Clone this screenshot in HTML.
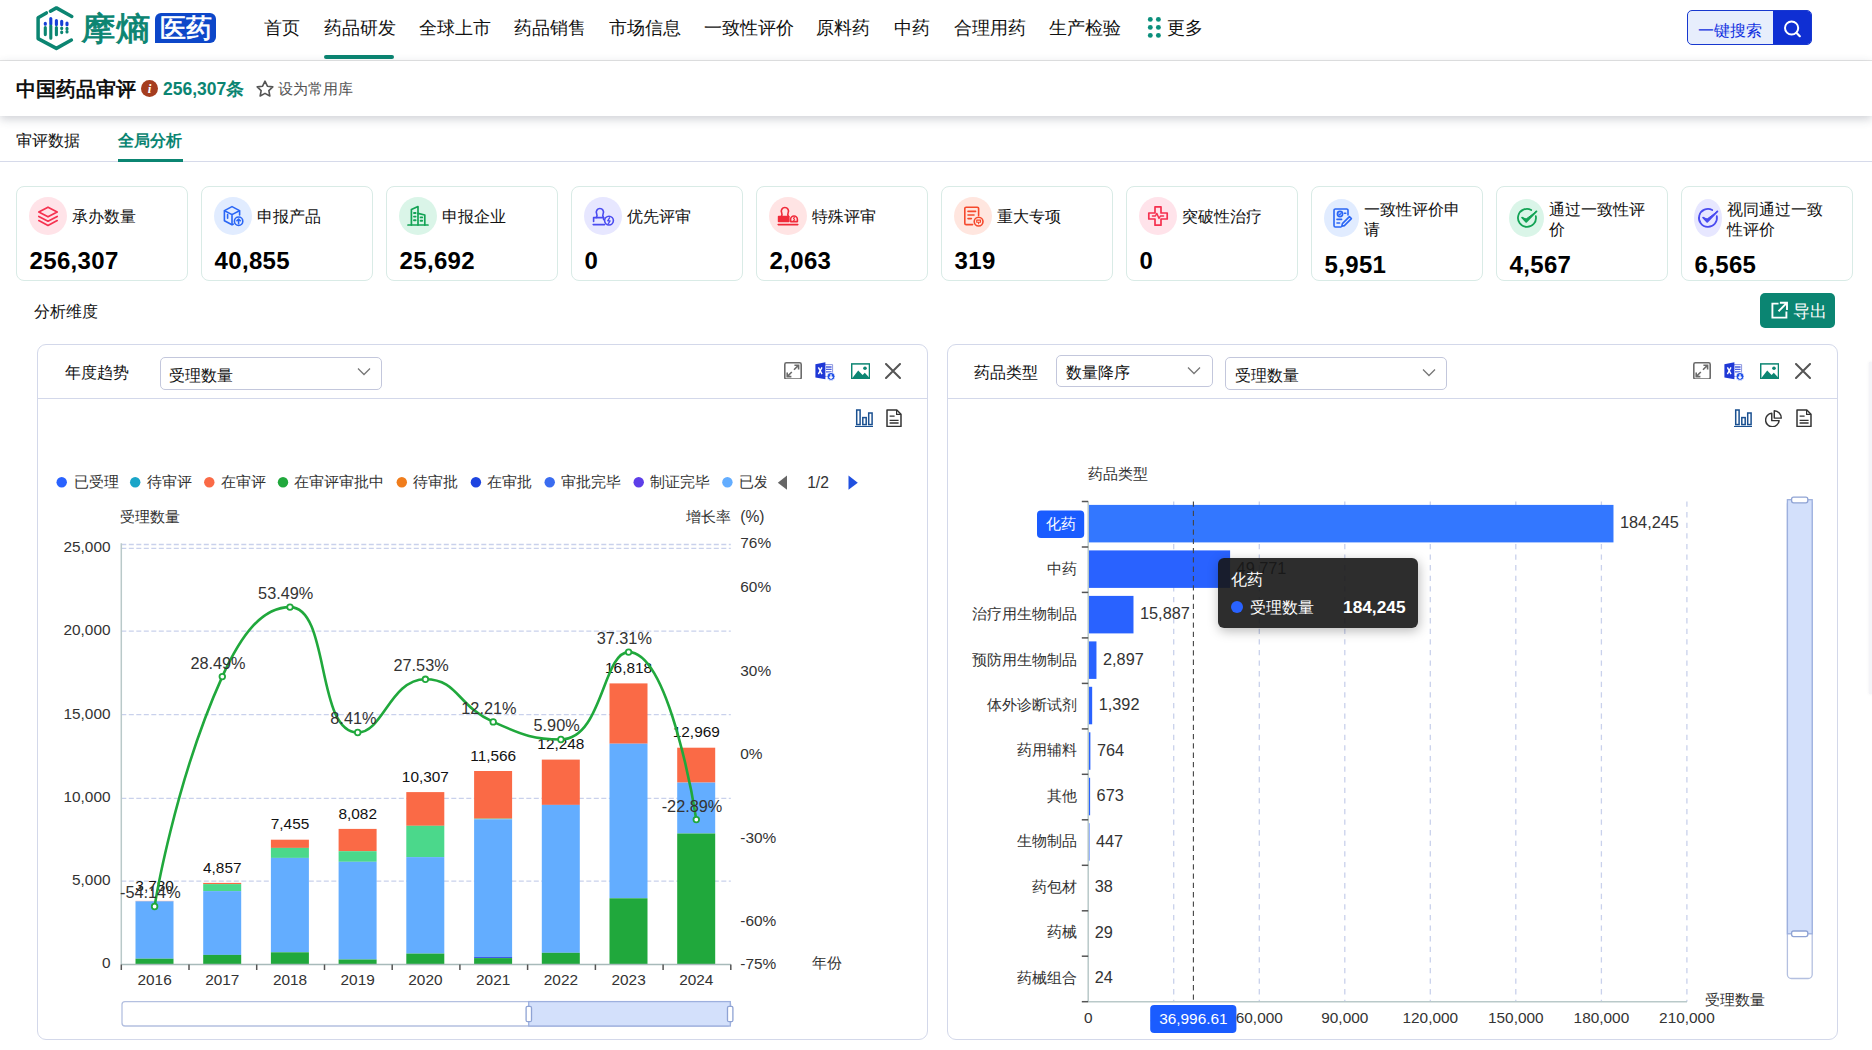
<!DOCTYPE html>
<html lang="zh">
<head>
<meta charset="utf-8">
<title>中国药品审评</title>
<style>
*{box-sizing:border-box;margin:0;padding:0}
html,body{width:1872px;height:1050px;overflow:hidden;background:#fff}
body{font-family:"Liberation Sans",sans-serif;color:#111;position:relative}
.abs{position:absolute}
/* header */
#hdr{position:absolute;left:0;top:0;width:1872px;height:61px;background:#fff;border-bottom:1px solid #e6e6e6}
.nav{position:absolute;top:16px;font-size:17.7px;line-height:24px;color:#111;white-space:nowrap}
#navline{position:absolute;left:324px;top:55px;width:70px;height:4px;border-radius:2px;background:#0b8572}
#sbox{position:absolute;left:1687px;top:10px;width:125px;height:35px;border:1.5px solid #1738cf;border-radius:5px;background:#e7eefc;overflow:hidden}
#sbox .t{position:absolute;left:10px;top:6.500px;font-size:16.200px;line-height:24px;color:#1030e0;white-space:nowrap}
#sbox .b{position:absolute;right:-1px;top:-1px;width:39px;height:35px;background:#0f2fd3}
/* title */
#ttl{position:absolute;left:0;top:61px;width:1872px;height:55px;background:#fff;box-shadow:0 3px 9px rgba(50,60,80,.24)}
#ttl h1{position:absolute;left:16px;top:14px;font-size:19.8px;line-height:28px;font-weight:bold;color:#111;white-space:nowrap}
#info{position:absolute;left:141px;top:19px;width:17px;height:17px;border-radius:50%;background:#a53d1f;color:#fff;font:italic bold 13px/17px "Liberation Serif",serif;text-align:center}
#cnt{position:absolute;left:163px;top:15px;font-size:17.5px;line-height:26px;font-weight:bold;color:#0b8572;white-space:nowrap}
#fav{position:absolute;left:278px;top:17px;font-size:15px;line-height:22px;color:#555;white-space:nowrap}
/* tabs */
#tabs{position:absolute;left:0;top:116px;width:1872px;height:46px;border-bottom:1.5px solid #d6daea}
.tab{position:absolute;top:12px;font-size:16.2px;line-height:24px;white-space:nowrap}
#tabline{position:absolute;left:118px;top:159.400px;width:65px;height:2.600px;background:#0b8572}
/* cards */
.card{position:absolute;top:186px;width:172px;height:95px;border:1.5px solid #d9ebe6;border-radius:8px;background:#fff}
.card .ic{position:absolute;left:12px;top:10px;width:38px;height:38px;border-radius:50%}
.card .ic svg{position:absolute;left:50%;top:50%;width:24px;height:24px;margin:-12px 0 0 -12px}
.card .lb{position:absolute;left:55px;top:17px;font-size:16.2px;line-height:24px;color:#111;white-space:nowrap}
.card .lb2{position:absolute;top:12px;font-size:16.2px;line-height:20px;color:#111}
.card .nm{position:absolute;left:12.5px;top:58px;font-size:24px;line-height:32px;font-weight:bold;color:#000;letter-spacing:.35px;white-space:nowrap}
.card.w .nm{top:62px}
.card.w .ic{top:12px}
/* analysis row */
#dim{position:absolute;left:34px;top:298.800px;font-size:16.2px;line-height:24px;color:#111}
#exp{position:absolute;left:1760px;top:293px;width:75px;height:35px;border-radius:5px;background:#0b8572;color:#fff}
#exp span{position:absolute;left:33px;top:6px;font-size:16.5px;line-height:24px;white-space:nowrap}
/* panels */
.panel{position:absolute;top:344px;height:696px;border:1.5px solid #d3d8ea;border-radius:9px;background:#fff}
.panel .hd{position:absolute;left:0;top:0;right:0;height:54px;border-bottom:1.5px solid #d3d8ea}
.ptitle{position:absolute;top:16px;font-size:16.2px;line-height:24px;color:#111;white-space:nowrap}
.sel{position:absolute;height:33px;border:1.5px solid #c3c7dc;border-radius:5px;background:#fff}
.sel span{position:absolute;left:8px;top:5px;font-size:16.2px;line-height:24px;color:#111;white-space:nowrap}
.sel svg{position:absolute;right:10px;top:9px;width:14px;height:10px}
svg text{font-family:"Liberation Sans",sans-serif}
</style>
</head>
<body>
<div id="hdr">
<svg class="abs" style="left:30px;top:0" width="200" height="60" viewBox="30 0 200 60">
<path d="M46.4 12.9 L38.1 17.7 V38.6 L56.4 48.4 L71.4 40 M71.8 16.5 L56.4 7.9 L50.4 11.2" fill="none" stroke="#0b8572" stroke-width="3.5" stroke-linecap="round" stroke-linejoin="round"/>
<g stroke-width="3.1" stroke-linecap="round">
<path d="M45.3 23.2V24.2M50.8 18.5V24.2M56.4 20.6V24.6M61.7 21.2V24.6M67 23V24.8" stroke="#1540d6"/>
<path d="M45.3 27.6V34.6M50.8 26V38.2M56.4 27.6V34.8M61.7 28V28.6M61.7 32V32.6M67 28.4V29M67 31.6V32" stroke="#0b8572"/>
</g>
<path d="M155 19a6 6 0 0 1 6-6h49a6 6 0 0 1 6 6v18a6 6 0 0 1-6 6h-55z" fill="#0d47c9"/>
<text x="81" y="39.6" font-size="32.8" fill="#0b8572" stroke="#0b8572" stroke-width=".9" textLength="69" lengthAdjust="spacingAndGlyphs">摩熵</text>
<text x="159.5" y="37.3" font-size="26" fill="#fff" stroke="#fff" stroke-width=".7" textLength="52" lengthAdjust="spacingAndGlyphs">医药</text>
</svg>
<div class="nav" style="left:264px">首页</div>
<div class="nav" style="left:324px">药品研发</div>
<div class="nav" style="left:419px">全球上市</div>
<div class="nav" style="left:514px">药品销售</div>
<div class="nav" style="left:609px">市场信息</div>
<div class="nav" style="left:704px">一致性评价</div>
<div class="nav" style="left:816px">原料药</div>
<div class="nav" style="left:894px">中药</div>
<div class="nav" style="left:954px">合理用药</div>
<div class="nav" style="left:1049px">生产检验</div>
<div class="nav" style="left:1167px">更多</div>
<div id="navline"></div>
<svg class="abs" style="left:1146px;top:15px" width="18" height="26" viewBox="0 0 18 26"><g fill="#0b8f7c"><circle cx="4.3" cy="4.4" r="2.45"/><circle cx="12.4" cy="4.4" r="2.45"/><circle cx="4.3" cy="12.4" r="2.45"/><circle cx="12.4" cy="12.4" r="2.45"/><circle cx="4.3" cy="20.4" r="2.45"/><circle cx="12.4" cy="20.4" r="2.45"/></g></svg>
<div id="sbox"><div class="t">一键搜索</div><div class="b"><svg width="39" height="35" viewBox="0 0 39 35"><circle cx="18.600" cy="18" r="6.600" fill="none" stroke="#fff" stroke-width="2"/><path d="M23.400 22.800L26.800 26.200" stroke="#fff" stroke-width="2.2" stroke-linecap="round"/></svg></div></div>
</div>
<div id="ttl"><h1>中国药品审评</h1><div id="info">i</div><div id="cnt">256,307条</div>
<svg class="abs" style="left:255px;top:18px" width="20" height="20" viewBox="0 0 20 20"><path d="M10 2.2l2.4 5 5.4.7-3.95 3.75.98 5.35L10 14.4l-4.83 2.6.98-5.35L2.2 7.9l5.4-.7z" fill="none" stroke="#555" stroke-width="1.6" stroke-linejoin="round"/></svg>
<div id="fav">设为常用库</div></div>
<div id="tabs"><div class="tab" style="left:16px">审评数据</div><div class="tab" style="left:118px;color:#0b8572;font-weight:bold">全局分析</div></div><div id="tabline"></div>
<div class="card" style="left:16px"><div class="ic" style="background:#ffe3e8;width:38px"><svg viewBox="0 0 24 24"><g fill="none" stroke="#f5314f" stroke-width="1.7" stroke-linejoin="round" stroke-linecap="round"><path d="M12 3.2L21.2 8 12 12.8 2.8 8z"/><path d="M2.8 12.4L12 17.2l9.2-4.8"/><path d="M2.8 16.6L12 21.4l9.2-4.8"/></g></svg></div><div class="lb">承办数量</div><div class="nm">256,307</div></div>
<div class="card" style="left:201px"><div class="ic" style="background:#e1ecff;width:38px"><svg viewBox="0 0 24 24"><g fill="none" stroke="#2a66f5" stroke-width="1.6" stroke-linejoin="round" stroke-linecap="round"><path d="M18.6 11V6.6L11 2.6 3.4 6.6v10.2l7.6 4 1.2-.6"/><path d="M3.6 6.8L11 10.6l7.4-3.8M11 10.6V20.4M6.6 10.6v3.6"/><circle cx="17.6" cy="17.2" r="4.2"/><path d="M17.6 19.4v-4.2M15.9 16.7l1.7-1.7 1.7 1.7"/></g></svg></div><div class="lb">申报产品</div><div class="nm">40,855</div></div>
<div class="card" style="left:386px"><div class="ic" style="background:#daf5e8;width:38px"><svg viewBox="0 0 24 24"><g fill="none" stroke="#13a355" stroke-width="1.7" stroke-linejoin="round" stroke-linecap="round"><path d="M2 21h20"/><path d="M5.4 21V5.6L12 2.6V21"/><path d="M12 9.4l6.8 1.6V21"/><path d="M8 9h1.6M8 12.6h1.6M8 16.2h1.6M14.6 13.4h1.6M14.6 16.8h1.6" stroke-width="1.9"/></g></svg></div><div class="lb">申报企业</div><div class="nm">25,692</div></div>
<div class="card" style="left:571px"><div class="ic" style="background:#e7e7ff;width:38px"><svg viewBox="0 0 24 24"><g fill="none" stroke="#4a4bf0" stroke-width="1.6" stroke-linejoin="round" stroke-linecap="round"><path d="M5.2 13.6c.9-1.4 1.2-2.4.5-3.8a3.6 3.6 0 1 1 6.4 0c-.7 1.4-.4 2.4.5 3.8"/><path d="M2.6 17.4v-3.8h10v2"/><path d="M2.2 20.6h11.4"/><circle cx="18" cy="16.6" r="4.4"/><path d="M18.6 13.8l-1.9 3h2.4l-1.9 3" stroke-width="1.3"/></g></svg></div><div class="lb">优先评审</div><div class="nm">0</div></div>
<div class="card" style="left:756px"><div class="ic" style="background:#ffe4e4;width:38px"><svg viewBox="0 0 24 24"><g fill="none" stroke="#f02b3a" stroke-width="1.6" stroke-linejoin="round" stroke-linecap="round"><path d="M5.2 12.6c.9-1.4 1.2-2.4.5-3.8a3.6 3.6 0 1 1 6.4 0c-.7 1.4-.4 2.4.5 3.8"/><path d="M2.6 17.4v-4.8h10.2v4.8z" fill="#f02b3a"/><path d="M2.2 20.6h19.6"/><path d="M14.6 17.6v-2.2a3.4 3.4 0 0 1 6.8 0v2.2z"/><path d="M18.7 13.7h-1.1v1.3h1v1.3h-1.2" stroke-width="1"/></g></svg></div><div class="lb">特殊评审</div><div class="nm">2,063</div></div>
<div class="card" style="left:941px"><div class="ic" style="background:#ffe6df;width:38px"><svg viewBox="0 0 24 24"><g fill="none" stroke="#f5492d" stroke-width="1.6" stroke-linejoin="round" stroke-linecap="round"><path d="M11.6 20.6H5.2a1.4 1.4 0 0 1-1.4-1.4V4.6a1.4 1.4 0 0 1 1.4-1.4h11a1.4 1.4 0 0 1 1.4 1.4v7"/><path d="M7 7.4h7.6M7 11h6M7 14.6h3.4"/><circle cx="17.6" cy="17.6" r="4.4"/><path d="M15.7 16.1h3.8v2.2h-3.8zM17.6 18.3v1.5" stroke-width="1.1"/></g></svg></div><div class="lb">重大专项</div><div class="nm">319</div></div>
<div class="card" style="left:1126px"><div class="ic" style="background:#ffe3ea;width:38px"><svg viewBox="0 0 24 24"><g fill="none" stroke="#f5314f" stroke-width="1.7" stroke-linejoin="round" stroke-linecap="round"><path d="M9 2.8h6v6.2h6.2v6H15v6.2H9V15H2.8V9H9z"/><path d="M6.4 12h3l1.4-2.6 2.2 5 1.4-2.4h3.2" stroke-width="1.4"/></g></svg></div><div class="lb">突破性治疗</div><div class="nm">0</div></div>
<div class="card w" style="left:1311px"><div class="ic" style="background:#e1ecff;width:35px"><svg viewBox="0 0 24 24"><g fill="none" stroke="#2a66f5" stroke-width="1.6" stroke-linejoin="round" stroke-linecap="round"><path d="M11 21H5.4A1.4 1.4 0 0 1 4 19.6V4.4A1.4 1.4 0 0 1 5.400 3h11.200A1.400 1.400 0 0 1 18 4.400V9"/><circle cx="10" cy="8" r="2.6"/><path d="M8.900 8l.8.9 1.500-1.700" stroke-width="1.200"/><path d="M14.400 7.200h1.400M7 13.400h4.600M7 17h2.600"/><path d="M19.400 10.600l2 2-7 7-2.600.6.600-2.600z"/></g></svg></div><div class="lb2" style="left:52px">一致性评价申<br>请</div><div class="nm">5,951</div></div>
<div class="card w" style="left:1496px"><div class="ic" style="background:#daf5e8;width:35px"><svg viewBox="0 0 24 24"><g fill="none" stroke="#13a355" stroke-width="1.8" stroke-linejoin="round" stroke-linecap="round"><path d="M20.800 10.200A9 9 0 1 1 16.200 4"/><path d="M7.200 11.600l4 4.200L21.400 5.400"/><path d="M7.200 11.600l4 4.200L21.400 5.400 11.400 12.800z" fill="#13a355" stroke-width="1"/></g></svg></div><div class="lb2" style="left:52px">通过一致性评<br>价</div><div class="nm">4,567</div></div>
<div class="card w" style="left:1681px"><div class="ic" style="background:#e7e7ff;width:28px"><svg viewBox="0 0 24 24"><g fill="none" stroke="#4a4bf0" stroke-width="1.800" stroke-linejoin="round" stroke-linecap="round"><path d="M20.800 10.200A9 9 0 1 1 16.200 4"/><path d="M7.200 11.600l4 4.200L21.400 5.400"/><path d="M7.200 11.600l4 4.200L21.400 5.400 11.400 12.800z" fill="#4a4bf0" stroke-width="1"/></g></svg></div><div class="lb2" style="left:45px">视同通过一致<br>性评价</div><div class="nm">6,565</div></div>

<div id="dim">分析维度</div>
<div id="exp"><svg class="abs" style="left:10px;top:8px" width="19" height="19" viewBox="0 0 19 19"><g fill="none" stroke="#fff" stroke-width="1.9" stroke-linecap="square" stroke-linejoin="miter"><path d="M7.600 2.600H2.400v14h14v-5.200"/><path d="M10.800 1.800h6.200v6.200M16.600 2.200l-7.400 7.400"/></g></svg><span>导出</span></div>
<div id="rstrip" class="abs" style="left:1868.500px;top:362px;width:8px;height:332px;background:#f4f4f8;box-shadow:0 0 3px rgba(90,90,120,.10)"></div>
<!--PANEL1--><div class="panel" style="left:37px;width:891px"><div class="hd"></div></div>
<div class="ptitle" style="left:65px;top:360px">年度趋势</div>
<div class="sel" style="left:160px;top:357px;width:222px"><span>受理数量</span><svg viewBox="0 0 14 10"><path d="M1 1.500l6 6 6-6" fill="none" stroke="#777" stroke-width="1.300"/></svg></div>
<svg class="abs" style="left:783.5px;top:361.600px" width="18" height="17.800" viewBox="0 0 18 17.800"><g fill="none" stroke="#6b6b6b" stroke-width="1.600"><rect x="0.800" y="0.800" width="16.400" height="16.200" rx="1.600"/><path d="M10 7.800l4.400-4.400M10.400 3.200h4.200v4.200M7.800 10l-4.400 4.400M3.200 10.400v4.200h4.200" stroke-width="1.600"/></g></svg><svg class="abs" style="left:815.0px;top:361px" width="21" height="20" viewBox="0 0 21 20"><g><path d="M9 3.600h8.600v11.800H9z" fill="#fff" stroke="#8d97e0" stroke-width="1"/><path d="M11 6h5.600M11 8.400h5.600M11 10.800h5.600" stroke="#4a5fe0" stroke-width="1.300"/><path d="M0.400 3.200L10.400 1.200v17L0.400 16.400z" fill="#1f38d6"/><path d="M3.400 6.400l3.600 6.800M7 6.400l-3.600 6.800" stroke="#fff" stroke-width="1.400"/><circle cx="16" cy="15.400" r="4" fill="#1f50e8" stroke="#fff" stroke-width=".8"/><path d="M16 13.200v4M14.400 15.800l1.600 1.600 1.600-1.600" fill="none" stroke="#fff" stroke-width="1.300"/></g></svg><svg class="abs" style="left:850.8px;top:362.500px" width="19.200" height="16.600" viewBox="0 0 19.200 16.600"><g><rect x="0.700" y="0.900" width="17.800" height="14.800" fill="#fff" stroke="#0b8572" stroke-width="1.500"/><path d="M1 15.600l6.200-8 4.400 4.400 2.200-2.200 4.400 4.600v1.200z" fill="#0b8572"/><circle cx="14" cy="5.200" r="1.800" fill="#0b8572"/></g></svg><svg class="abs" style="left:885.3px;top:362.800px" width="16" height="16" viewBox="0 0 16 16"><path d="M1 1l14 14M15 1L1 15" stroke="#555" stroke-width="2" fill="none" stroke-linecap="round"/></svg><svg class="abs" style="left:855.200px;top:409px" width="18" height="18.200" viewBox="0 0 18 18.200"><g fill="none" stroke="#1a5090" stroke-width="1.500"><rect x="1.700" y="1" width="3.400" height="14.600"/><rect x="7.800" y="8.600" width="3.400" height="7"/><rect x="13.700" y="4" width="3.400" height="11.600"/><path d="M0 17.600h18" stroke-width="1.300"/></g></svg><svg class="abs" style="left:886px;top:409px" width="16" height="18.400" viewBox="0 0 16 18.400"><g fill="none" stroke="#333" stroke-width="1.500" stroke-linejoin="round"><path d="M1 1h9.800l4.200 4.200v12.200H1z"/><path d="M10.600 1v4.400h4.400" stroke-width="1.200"/><path d="M3.600 7.200h5M3.600 11.300h9M3.600 14h9" stroke-width="1.300"/></g></svg>
<svg class="abs" style="left:38px;top:440px" width="889" height="598" viewBox="38 440 889 598">
<defs><clipPath id="lc"><rect x="40" y="465" width="726.500" height="34"/></clipPath></defs><g clip-path="url(#lc)" font-size="15" fill="#333"><circle cx="61.7" cy="482.300" r="5.200" fill="#2962ff"/><text x="73.5" y="486.800">已受理</text><circle cx="135.2" cy="482.300" r="5.200" fill="#1aa5c8"/><text x="146.5" y="486.800">待审评</text><circle cx="209.3" cy="482.300" r="5.200" fill="#fa6a46"/><text x="220.6" y="486.800">在审评</text><circle cx="283.0" cy="482.300" r="5.200" fill="#20a83c"/><text x="294.4" y="486.800">在审评审批中</text><circle cx="401.8" cy="482.300" r="5.200" fill="#f07d1c"/><text x="412.9" y="486.800">待审批</text><circle cx="475.9" cy="482.300" r="5.200" fill="#1d44e0"/><text x="487.3" y="486.800">在审批</text><circle cx="549.7" cy="482.300" r="5.200" fill="#3a6cf0"/><text x="561.3" y="486.800">审批完毕</text><circle cx="638.7" cy="482.300" r="5.200" fill="#5d3ee8"/><text x="650.0" y="486.800">制证完毕</text><circle cx="727.4" cy="482.300" r="5.200" fill="#63adff"/><text x="738.7" y="486.800">已发</text></g>
<path d="M777.800 482.700l9.200-7.100v14.200z" fill="#666"/><path d="M857.800 482.700l-9.300-7.100v14.200z" fill="#2050e0"/><text x="818" y="488" font-size="15.600" fill="#333" text-anchor="middle">1/2</text>
<text x="120.300" y="521.700" font-size="15" fill="#333">受理数量</text><text x="686" y="521.700" font-size="15" fill="#333">增长率</text><text x="740.300" y="522" font-size="15.600" fill="#333">(%)</text>
<g stroke="#c9d1ec" stroke-width="1.300" stroke-dasharray="5 2.500" fill="none"><path d="M121.300 544.500H730.800"/><path d="M121.300 548.3H730.800"/><path d="M121.300 631.2H730.800"/><path d="M121.300 714.6H730.800"/><path d="M121.300 798.4H730.800"/><path d="M121.300 881.2H730.800"/></g>
<g font-size="15.400" fill="#333" text-anchor="end"><text x="110.500" y="552.0">25,000</text><text x="110.500" y="635.2">20,000</text><text x="110.500" y="718.5">15,000</text><text x="110.500" y="801.8">10,000</text><text x="110.500" y="885.0">5,000</text><text x="110.500" y="968.2">0</text></g>
<g font-size="15.400" fill="#333"><text x="740.300" y="548.0">76%</text><text x="740.300" y="592.3">60%</text><text x="740.300" y="675.8">30%</text><text x="740.300" y="758.9">0%</text><text x="740.300" y="843.3">-30%</text><text x="740.300" y="926.3">-60%</text><text x="740.300" y="968.5">-75%</text></g>
<text x="811.600" y="968.400" font-size="15" fill="#333">年份</text>
<g><rect x="135.5" y="900.9" width="38" height="0.4" fill="#fa6a46"/><rect x="135.5" y="901.3" width="38" height="57.4" fill="#63adff"/><rect x="135.5" y="958.7" width="38" height="5.8" fill="#20a83c"/><rect x="203.2" y="882.9" width="38" height="1.2" fill="#fa6a46"/><rect x="203.2" y="884.1" width="38" height="7.0" fill="#4bd88b"/><rect x="203.2" y="891.1" width="38" height="63.8" fill="#63adff"/><rect x="203.2" y="954.9" width="38" height="9.6" fill="#20a83c"/><rect x="270.9" y="839.7" width="38" height="8.2" fill="#fa6a46"/><rect x="270.9" y="847.9" width="38" height="10.0" fill="#4bd88b"/><rect x="270.9" y="857.9" width="38" height="94.4" fill="#63adff"/><rect x="270.9" y="952.3" width="38" height="12.2" fill="#20a83c"/><rect x="338.6" y="828.9" width="38" height="22.3" fill="#fa6a46"/><rect x="338.6" y="851.2" width="38" height="10.6" fill="#4bd88b"/><rect x="338.6" y="861.8" width="38" height="97.7" fill="#63adff"/><rect x="338.6" y="959.5" width="38" height="5.0" fill="#20a83c"/><rect x="406.3" y="792.1" width="38" height="33.7" fill="#fa6a46"/><rect x="406.3" y="825.8" width="38" height="31.3" fill="#4bd88b"/><rect x="406.3" y="857.1" width="38" height="96.5" fill="#63adff"/><rect x="406.3" y="953.6" width="38" height="10.9" fill="#20a83c"/><rect x="474.1" y="771.0" width="38" height="47.7" fill="#fa6a46"/><rect x="474.1" y="818.7" width="38" height="0.6" fill="#4bd88b"/><rect x="474.1" y="819.3" width="38" height="137.6" fill="#63adff"/><rect x="474.1" y="956.9" width="38" height="1.2" fill="#3a5ce8"/><rect x="474.1" y="958.1" width="38" height="6.4" fill="#20a83c"/><rect x="541.8" y="759.6" width="38" height="45.3" fill="#fa6a46"/><rect x="541.8" y="804.9" width="38" height="147.9" fill="#63adff"/><rect x="541.8" y="952.8" width="38" height="11.7" fill="#20a83c"/><rect x="609.5" y="683.4" width="38" height="60.3" fill="#fa6a46"/><rect x="609.5" y="743.7" width="38" height="154.6" fill="#63adff"/><rect x="609.5" y="898.3" width="38" height="66.2" fill="#20a83c"/><rect x="677.2" y="747.7" width="38" height="34.9" fill="#fa6a46"/><rect x="677.2" y="782.6" width="38" height="50.9" fill="#63adff"/><rect x="677.2" y="833.5" width="38" height="131.0" fill="#20a83c"/></g>
<path d="M121.300 543.200V964.500" stroke="#b9c9c9" stroke-width="1.500"/><path d="M121.300 964.500H730.800" stroke="#a8baba" stroke-width="1.500"/><g stroke="#555" stroke-width="1.500"><path d="M121.3 964.500v5.500"/><path d="M189.0 964.500v5.500"/><path d="M256.7 964.500v5.500"/><path d="M324.5 964.500v5.500"/><path d="M392.2 964.500v5.500"/><path d="M459.9 964.500v5.500"/><path d="M527.6 964.500v5.500"/><path d="M595.4 964.500v5.500"/><path d="M663.1 964.500v5.500"/><path d="M730.8 964.500v5.500"/></g>
<g font-size="15.400" fill="#333" text-anchor="middle"><text x="154.6" y="985.400">2016</text><text x="222.3" y="985.400">2017</text><text x="290.0" y="985.400">2018</text><text x="357.7" y="985.400">2019</text><text x="425.4" y="985.400">2020</text><text x="493.2" y="985.400">2021</text><text x="560.9" y="985.400">2022</text><text x="628.6" y="985.400">2023</text><text x="696.3" y="985.400">2024</text></g>
<g font-size="15.400" fill="#111" text-anchor="middle"><text x="154.6" y="890.5">3,780</text><text x="222.3" y="872.5">4,857</text><text x="290.0" y="829.3">7,455</text><text x="357.7" y="818.5">8,082</text><text x="425.4" y="781.7">10,307</text><text x="493.2" y="760.6">11,566</text><text x="560.9" y="749.2">12,248</text><text x="628.6" y="673.0">16,818</text><text x="696.3" y="737.3">12,969</text></g>
<path d="M154.6 906.5 C154.6 906.5 174.1 783.2 222.3 676.6 C241.8 633.5 262.6 607.1 290.0 607.1 C330.3 607.1 315.5 732.5 357.7 732.5 C383.2 732.5 390.3 679.3 425.4 679.3 C458.1 679.3 457.0 705.9 493.2 721.9 C524.8 736.0 534.6 739.5 560.9 739.5 C602.4 739.5 602.9 652.1 628.6 652.1 C670.6 652.1 696.3 819.6 696.3 819.6" fill="none" stroke="#20a83c" stroke-width="2.600" stroke-linejoin="round"/><g fill="#fff" stroke="#20a83c" stroke-width="1.800"><circle cx="154.6" cy="906.5" r="2.800"/><circle cx="222.3" cy="676.6" r="2.800"/><circle cx="290.0" cy="607.1" r="2.800"/><circle cx="357.7" cy="732.5" r="2.800"/><circle cx="425.4" cy="679.3" r="2.800"/><circle cx="493.2" cy="721.9" r="2.800"/><circle cx="560.9" cy="739.5" r="2.800"/><circle cx="628.6" cy="652.1" r="2.800"/><circle cx="696.3" cy="819.6" r="2.800"/></g>
<g font-size="16.300" fill="#333" text-anchor="middle"><text x="150.3" y="898.4">-54.14%</text><text x="218.0" y="668.5">28.49%</text><text x="285.7" y="599.0">53.49%</text><text x="353.4" y="724.4">8.41%</text><text x="421.1" y="671.2">27.53%</text><text x="488.9" y="713.8">12.21%</text><text x="556.6" y="731.4">5.90%</text><text x="624.3" y="644.0">37.31%</text><text x="692.0" y="811.5">-22.89%</text></g>
<rect x="122" y="1001.600" width="608.600" height="24.400" rx="3" fill="#fff" stroke="#b4c0e0" stroke-width="1.300"/><rect x="528.700" y="1001.600" width="201.600" height="24.400" fill="#d3e0fb" stroke="#9db0de" stroke-width="1.300"/><rect x="526.100" y="1006.300" width="5.400" height="15.400" rx="1.500" fill="#fff" stroke="#8fa3d4" stroke-width="1.300"/><rect x="727.500" y="1006.300" width="5.400" height="15.400" rx="1.500" fill="#fff" stroke="#8fa3d4" stroke-width="1.300"/>
</svg>
<!--/PANEL1-->
<!--PANEL2--><div class="panel" style="left:947px;width:891px"><div class="hd"></div></div>
<div class="ptitle" style="left:974px;top:360px">药品类型</div>
<div class="sel" style="left:1056px;top:355px;width:157px;height:31.800px"><span style="left:9px;top:4px">数量降序</span><svg viewBox="0 0 14 10" style="top:10px;right:11px"><path d="M1 1.500l6 6 6-6" fill="none" stroke="#777" stroke-width="1.300"/></svg></div>
<div class="sel" style="left:1225px;top:357px;width:222px"><span style="left:9px">受理数量</span><svg viewBox="0 0 14 10" style="top:10px;right:10px"><path d="M1 1.500l6 6 6-6" fill="none" stroke="#777" stroke-width="1.300"/></svg></div>
<svg class="abs" style="left:1692.7px;top:361.600px" width="18" height="17.800" viewBox="0 0 18 17.800"><g fill="none" stroke="#6b6b6b" stroke-width="1.600"><rect x="0.800" y="0.800" width="16.400" height="16.200" rx="1.600"/><path d="M10 7.800l4.400-4.400M10.400 3.200h4.200v4.200M7.800 10l-4.400 4.400M3.200 10.400v4.200h4.200" stroke-width="1.600"/></g></svg><svg class="abs" style="left:1724.2px;top:361px" width="21" height="20" viewBox="0 0 21 20"><g><path d="M9 3.600h8.600v11.800H9z" fill="#fff" stroke="#8d97e0" stroke-width="1"/><path d="M11 6h5.600M11 8.400h5.600M11 10.800h5.600" stroke="#4a5fe0" stroke-width="1.300"/><path d="M0.400 3.200L10.400 1.200v17L0.400 16.400z" fill="#1f38d6"/><path d="M3.400 6.400l3.600 6.800M7 6.400l-3.600 6.800" stroke="#fff" stroke-width="1.400"/><circle cx="16" cy="15.400" r="4" fill="#1f50e8" stroke="#fff" stroke-width=".8"/><path d="M16 13.200v4M14.400 15.800l1.600 1.600 1.600-1.600" fill="none" stroke="#fff" stroke-width="1.300"/></g></svg><svg class="abs" style="left:1760.0px;top:362.500px" width="19.200" height="16.600" viewBox="0 0 19.200 16.600"><g><rect x="0.700" y="0.900" width="17.800" height="14.800" fill="#fff" stroke="#0b8572" stroke-width="1.500"/><path d="M1 15.600l6.200-8 4.400 4.400 2.200-2.200 4.400 4.600v1.200z" fill="#0b8572"/><circle cx="14" cy="5.200" r="1.800" fill="#0b8572"/></g></svg><svg class="abs" style="left:1794.5px;top:362.800px" width="16" height="16" viewBox="0 0 16 16"><path d="M1 1l14 14M15 1L1 15" stroke="#555" stroke-width="2" fill="none" stroke-linecap="round"/></svg><svg class="abs" style="left:1734.400px;top:409px" width="18" height="18.200" viewBox="0 0 18 18.200"><g fill="none" stroke="#1a5090" stroke-width="1.500"><rect x="1.700" y="1" width="3.400" height="14.600"/><rect x="7.800" y="8.600" width="3.400" height="7"/><rect x="13.700" y="4" width="3.400" height="11.600"/><path d="M0 17.600h18" stroke-width="1.300"/></g></svg><svg class="abs" style="left:1765.300px;top:409.500px" width="17" height="17.400" viewBox="0 0 17.600 18"><g fill="none" stroke="#333" stroke-width="1.500"><path d="M7 3.400A7 7 0 1 0 14.600 11H7z" stroke-linejoin="round"/><path d="M9.600 0.800v7.600h7.200A7.400 7.400 0 0 0 9.600 0.800z" stroke-linejoin="round"/></g></svg><svg class="abs" style="left:1796px;top:409px" width="16" height="18.400" viewBox="0 0 16 18.400"><g fill="none" stroke="#333" stroke-width="1.500" stroke-linejoin="round"><path d="M1 1h9.800l4.200 4.200v12.200H1z"/><path d="M10.600 1v4.400h4.400" stroke-width="1.200"/><path d="M3.600 7.200h5M3.600 11.300h9M3.600 14h9" stroke-width="1.300"/></g></svg>
<svg class="abs" style="left:948px;top:440px" width="889" height="598" viewBox="948 440 889 598">
<text x="1088.200" y="479.300" font-size="15" fill="#333">药品类型</text>
<g stroke="#c9d1ec" stroke-width="1.300" stroke-dasharray="5.300 5.300" fill="none"><path d="M1173.7 501.500V1001.700"/><path d="M1259.3 501.500V1001.700"/><path d="M1344.8 501.500V1001.700"/><path d="M1430.3 501.500V1001.700"/><path d="M1515.8 501.500V1001.700"/><path d="M1601.4 501.500V1001.700"/><path d="M1686.9 501.500V1001.700"/></g>
<g><rect x="1088.2" y="504.9" width="525.28" height="37.500" fill="#3377ff"/><rect x="1088.2" y="550.4" width="141.90" height="37.500" fill="#2962ff"/><rect x="1088.2" y="595.9" width="45.29" height="37.500" fill="#2962ff"/><rect x="1088.2" y="641.4" width="8.26" height="37.500" fill="#2962ff"/><rect x="1088.2" y="686.8" width="3.97" height="37.500" fill="#2962ff"/><rect x="1088.2" y="732.3" width="2.18" height="37.500" fill="#2962ff"/><rect x="1088.2" y="777.8" width="1.92" height="37.500" fill="#2962ff"/><rect x="1088.2" y="823.2" width="1.27" height="37.500" fill="#2962ff"/><rect x="1088.2" y="868.7" width="0.11" height="37.500" fill="#2962ff"/><rect x="1088.2" y="914.2" width="0.08" height="37.500" fill="#2962ff"/><rect x="1088.2" y="959.7" width="0.07" height="37.500" fill="#2962ff"/></g>
<path d="M1088.2 501.500V1001.700" stroke="#b9c9c9" stroke-width="1.500"/><path d="M1088.2 1001.700H1687" stroke="#b9c9c9" stroke-width="1.500"/><g stroke="#555" stroke-width="1.500"><path d="M1081.800 501.5h6.400"/><path d="M1081.800 547.0h6.400"/><path d="M1081.800 592.4h6.400"/><path d="M1081.800 637.9h6.400"/><path d="M1081.800 683.4h6.400"/><path d="M1081.800 728.9h6.400"/><path d="M1081.800 774.3h6.400"/><path d="M1081.800 819.8h6.400"/><path d="M1081.800 865.3h6.400"/><path d="M1081.800 910.8h6.400"/><path d="M1081.800 956.2h6.400"/><path d="M1081.800 1001.7h6.400"/></g>
<rect x="1037" y="510.500" width="47.200" height="27.500" rx="4" fill="#1a5cff"/><g font-size="15" text-anchor="end" fill="#333"><text x="1060.600" y="528.8" fill="#fff" text-anchor="middle">化药</text><text x="1077.400" y="573.5">中药</text><text x="1077.400" y="619.0">治疗用生物制品</text><text x="1077.400" y="664.5">预防用生物制品</text><text x="1077.400" y="709.9">体外诊断试剂</text><text x="1077.400" y="755.4">药用辅料</text><text x="1077.400" y="800.9">其他</text><text x="1077.400" y="846.3">生物制品</text><text x="1077.400" y="891.8">药包材</text><text x="1077.400" y="937.3">药械</text><text x="1077.400" y="982.8">药械组合</text></g>
<g font-size="16.300" fill="#333"><text x="1620.0" y="528.3">184,245</text><text x="1236.6" y="573.8">49,771</text><text x="1140.0" y="619.3">15,887</text><text x="1103.0" y="664.8">2,897</text><text x="1098.7" y="710.2">1,392</text><text x="1096.9" y="755.7">764</text><text x="1096.6" y="801.2">673</text><text x="1096.0" y="846.6">447</text><text x="1094.8" y="892.1">38</text><text x="1094.8" y="937.6">29</text><text x="1094.8" y="983.1">24</text></g>
<g font-size="15.400" fill="#333" text-anchor="middle"><text x="1088.2" y="1022.800">0</text><text x="1173.7" y="1022.800">30,000</text><text x="1259.3" y="1022.800">60,000</text><text x="1344.8" y="1022.800">90,000</text><text x="1430.3" y="1022.800">120,000</text><text x="1515.8" y="1022.800">150,000</text><text x="1601.4" y="1022.800">180,000</text><text x="1686.9" y="1022.800">210,000</text></g>
<text x="1705.400" y="1005.300" font-size="15" fill="#333">受理数量</text>
<path d="M1193.400 501.500V1001.700" stroke="#444" stroke-width="1.100" stroke-dasharray="5.300 4" fill="none"/><rect x="1150.200" y="1005" width="86.200" height="28" rx="4" fill="#1a5cff"/><text x="1193.400" y="1024.300" font-size="15.400" fill="#fff" text-anchor="middle">36,996.61</text>
<rect x="1787.400" y="499.700" width="24.800" height="478.800" rx="4" fill="#fff" stroke="#b4c0e0" stroke-width="1.300"/><rect x="1787.400" y="499.700" width="24.800" height="434.100" fill="#d3e0fb" stroke="#9db0de" stroke-width="1.300"/><rect x="1791.600" y="497.200" width="16.200" height="5.600" rx="2" fill="#fff" stroke="#8fa3d4" stroke-width="1.300"/><rect x="1791.600" y="931" width="16.200" height="5.600" rx="2" fill="#fff" stroke="#8fa3d4" stroke-width="1.300"/>
</svg>
<div class="abs" style="left:1218px;top:557.500px;width:200px;height:70px;border-radius:6px;background:rgba(22,22,22,.9);box-shadow:1px 3px 12px rgba(0,0,0,.28);color:#fff">
<div class="abs" style="left:12.500px;top:9px;font-size:16.200px;line-height:24px;white-space:nowrap">化药</div>
<div class="abs" style="left:13px;top:43px;width:12.300px;height:12.300px;border-radius:50%;background:#2962ff"></div>
<div class="abs" style="left:32.400px;top:37px;font-size:16.200px;line-height:24px;white-space:nowrap">受理数量</div>
<div class="abs" style="right:12.500px;top:37px;font-size:17.300px;line-height:24px;font-weight:bold;white-space:nowrap">184,245</div>
</div>
<!--/PANEL2-->
</body>
</html>
